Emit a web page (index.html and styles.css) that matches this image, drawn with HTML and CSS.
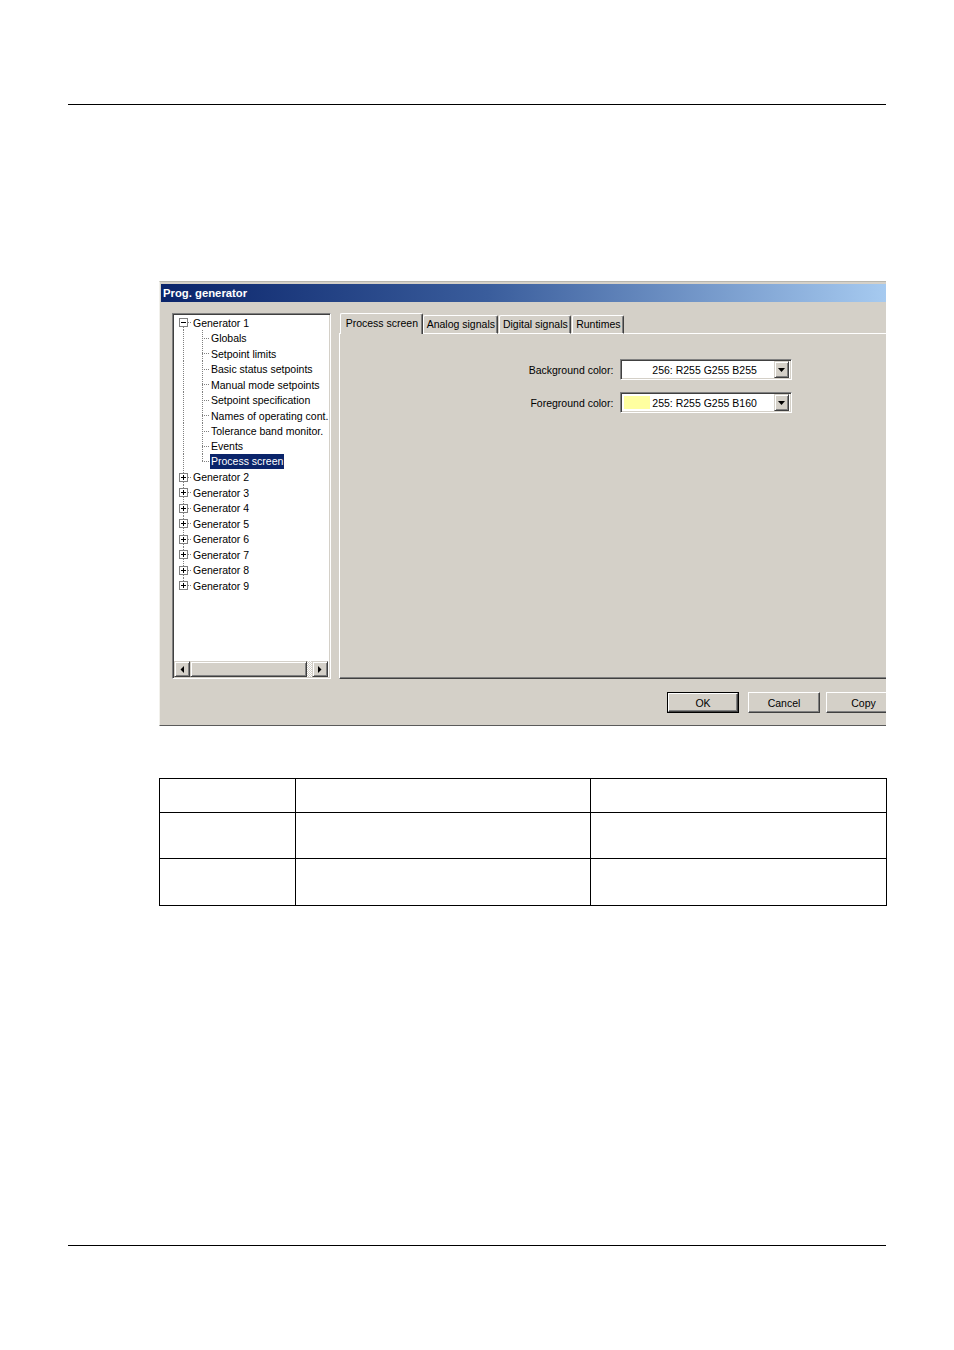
FILE: index.html
```html
<!DOCTYPE html>
<html>
<head>
<meta charset="utf-8">
<link rel="stylesheet" href="styles.css">
</head>
<body>
<div class="page">
  <div class="rule rule-top"></div>

  <div class="window">
    <div class="titlebar">Prog. generator</div>
    <div class="client">
      <div class="main">
        <div class="tree">
          <div class="tree-body">
            <div class="row gen first"><span class="g"><span class="box minus"></span></span><span class="label">Generator 1</span></div>
            <div class="row child"><span class="v"></span><span class="c"></span><span class="label">Globals</span></div>
            <div class="row child"><span class="v"></span><span class="c"></span><span class="label">Setpoint limits</span></div>
            <div class="row child"><span class="v"></span><span class="c"></span><span class="label">Basic status setpoints</span></div>
            <div class="row child"><span class="v"></span><span class="c"></span><span class="label">Manual mode setpoints</span></div>
            <div class="row child"><span class="v"></span><span class="c"></span><span class="label">Setpoint specification</span></div>
            <div class="row child"><span class="v"></span><span class="c"></span><span class="label">Names of operating cont.</span></div>
            <div class="row child"><span class="v"></span><span class="c"></span><span class="label">Tolerance band monitor.</span></div>
            <div class="row child"><span class="v"></span><span class="c"></span><span class="label">Events</span></div>
            <div class="row child lastchild"><span class="v"></span><span class="c"></span><span class="label selected">Process screen</span></div>
            <div class="row gen"><span class="g"><span class="box plus"></span></span><span class="label">Generator 2</span></div>
            <div class="row gen"><span class="g"><span class="box plus"></span></span><span class="label">Generator 3</span></div>
            <div class="row gen"><span class="g"><span class="box plus"></span></span><span class="label">Generator 4</span></div>
            <div class="row gen"><span class="g"><span class="box plus"></span></span><span class="label">Generator 5</span></div>
            <div class="row gen"><span class="g"><span class="box plus"></span></span><span class="label">Generator 6</span></div>
            <div class="row gen"><span class="g"><span class="box plus"></span></span><span class="label">Generator 7</span></div>
            <div class="row gen"><span class="g"><span class="box plus"></span></span><span class="label">Generator 8</span></div>
            <div class="row gen last"><span class="g"><span class="box plus"></span></span><span class="label">Generator 9</span></div>
          </div>
          <div class="hscroll">
            <span class="sbtn"><svg width="4" height="7" viewBox="0 0 4 7"><path d="M4 0V7L0.5 3.5Z" fill="#000"/></svg></span>
            <span class="thumb"></span>
            <span class="track"></span>
            <span class="sbtn"><svg width="4" height="7" viewBox="0 0 4 7"><path d="M0 0V7L3.5 3.5Z" fill="#000"/></svg></span>
          </div>
        </div>

        <div class="tabs">
          <div class="tabstrip">
            <span class="tab-lead"></span>
            <span class="tab active">Process screen</span>
            <span class="tab t-analog">Analog signals</span>
            <span class="tab-gap"></span>
            <span class="tab t-digital">Digital signals</span>
            <span class="tab-gap"></span>
            <span class="tab t-run">Runtimes</span>
            <span class="tab-fill"></span>
          </div>
          <div class="panel">
            <div class="form">
              <span class="flabel">Background color:</span>
              <span class="combo"><span class="swatch sw-white"></span><span class="ctext">256: R255 G255 B255</span><span class="drop"><svg width="7" height="4" viewBox="0 0 7 4"><path d="M0 0H7L3.5 4Z" fill="#000"/></svg></span></span>
              <span class="flabel">Foreground color:</span>
              <span class="combo"><span class="swatch sw-yellow"></span><span class="ctext">255: R255 G255 B160</span><span class="drop"><svg width="7" height="4" viewBox="0 0 7 4"><path d="M0 0H7L3.5 4Z" fill="#000"/></svg></span></span>
            </div>
          </div>
        </div>
      </div>

      <div class="buttons">
        <span class="btn default"><span class="btn-in">OK</span></span>
        <span class="btn cancel"><span class="btn-in">Cancel</span></span>
        <span class="btn copy"><span class="btn-in">Copy</span></span>
      </div>
    </div>
  </div>

  <table class="grid">
    <tr class="r1"><td class="c1"></td><td class="c2"></td><td class="c3"></td></tr>
    <tr class="r2"><td></td><td></td><td></td></tr>
    <tr class="r3"><td></td><td></td><td></td></tr>
  </table>

  <div class="rule rule-bottom"></div>
</div>
</body>
</html>
```

FILE: styles.css
```css
html, body {
  margin: 0;
  padding: 0;
  background: #ffffff;
}

.page {
  width: 954px;
  height: 1350px;
  padding-top: 104px;
  box-sizing: border-box;
  font-family: "Liberation Sans", Arial, sans-serif;
}

.rule {
  margin: 0 68px;
  border-top: 1px solid #000;
}

/* ---------- dialog window ---------- */
.window {
  margin: 176px 0 0 159px;
  width: 727px;
  box-sizing: border-box;
  background: #d4d0c8;
  border-top: 1px solid #b8b6ae;
  border-left: 1px solid #f2f1ec;
  border-bottom: 1px solid #5a5a5a;
  padding: 2px 0 0 1px;
  overflow: hidden;
  font-size: 10.5px;
  color: #000;
}

.titlebar {
  height: 18px;
  line-height: 18px;
  padding-left: 2px;
  background: linear-gradient(to right, #0a246a 0%, #3a5d9c 45%, #a6caf0 100%);
  color: #fff;
  font-weight: bold;
  font-size: 11.3px;
  white-space: nowrap;
}

.client {
  padding: 11px 0 12px 11px;
}

.main {
  display: flex;
  gap: 8px;
  height: 366px;
}

/* ---------- tree ---------- */
.tree {
  flex: 0 0 158px;
  box-sizing: border-box;
  display: flex;
  flex-direction: column;
  border-top: 1px solid #808080;
  border-left: 1px solid #808080;
  border-right: 1px solid #ffffff;
  border-bottom: 1px solid #ffffff;
  box-shadow: inset 1px 1px 0 #404040, inset -1px -1px 0 #d4d0c8;
  padding: 1px;
  background: #fff;
}

.tree-body {
  flex: 1;
  background: #fff;
  overflow: hidden;
}

.row {
  display: flex;
  align-items: center;
  height: 15.47px;
  white-space: nowrap;
}

.label {
  padding: 0 1px;
  line-height: 14px;
}

.label.selected {
  background: #0a246a;
  color: #fff;
  line-height: 15px;
}

.dots-v {
  background-image: repeating-linear-gradient(to bottom, #808080 0 1px, transparent 1px 2px);
}

.g {
  width: 18px;
  height: 100%;
  display: flex;
  align-items: center;
  background-image:
    repeating-linear-gradient(to bottom, #808080 0 1px, transparent 1px 2px),
    repeating-linear-gradient(to right, #808080 0 1px, transparent 1px 2px);
  background-size: 1px 100%, 5px 1px;
  background-position: 9px 0, 14px 50%;
  background-repeat: no-repeat;
}

.gen.first .g {
  background-size: 1px 50%, 5px 1px;
  background-position: 9px 100%, 14px 50%;
}

.gen.last .g {
  background-size: 1px 50%, 5px 1px;
  background-position: 9px 0, 14px 50%;
}

.box {
  width: 9px;
  height: 9px;
  box-sizing: border-box;
  margin-left: 5px;
  border: 1px solid #808080;
}

.box.minus {
  background:
    linear-gradient(#000, #000) center / 5px 1px no-repeat,
    #fff;
}

.box.plus {
  background:
    linear-gradient(#000, #000) center / 5px 1px no-repeat,
    linear-gradient(#000, #000) center / 1px 5px no-repeat,
    #fff;
}

.v {
  width: 19px;
  height: 100%;
  background-image: repeating-linear-gradient(to bottom, #808080 0 1px, transparent 1px 2px);
  background-size: 1px 100%;
  background-position: 9px 0;
  background-repeat: no-repeat;
}

.c {
  width: 17px;
  height: 100%;
  background-image:
    repeating-linear-gradient(to bottom, #808080 0 1px, transparent 1px 2px),
    repeating-linear-gradient(to right, #808080 0 1px, transparent 1px 2px);
  background-size: 1px 100%, 8px 1px;
  background-position: 9px 0, 9px 50%;
  background-repeat: no-repeat;
}

.lastchild .c {
  background-size: 1px 50%, 8px 1px;
}

/* scrollbar */
.hscroll {
  height: 16px;
  display: flex;
  flex: 0 0 16px;
}

.sbtn, .thumb {
  box-sizing: border-box;
  background: #d4d0c8;
  border-top: 1px solid #d4d0c8;
  border-left: 1px solid #d4d0c8;
  border-right: 1px solid #404040;
  border-bottom: 1px solid #404040;
  box-shadow: inset 1px 1px 0 #fff, inset -1px -1px 0 #808080;
}

.sbtn {
  width: 16px;
  display: flex;
  align-items: center;
  justify-content: center;
}

.thumb {
  width: 117px;
}

.track {
  width: 5px;
  background: repeating-conic-gradient(#ffffff 0 25%, #d4d0c8 0 50%) 0 0 / 2px 2px;
}

/* ---------- tabs ---------- */
.tabs {
  flex: 0 0 570px;
  display: flex;
  flex-direction: column;
}

.tabstrip {
  display: flex;
  align-items: flex-end;
  height: 21px;
  white-space: nowrap;
}

.tab-lead, .tab-gap, .tab-fill {
  height: 0;
  border-bottom: 1px solid #fff;
}

.tab-lead { width: 1px; }
.tab-gap { width: 1px; }
.tab-fill { flex: 1; }

.tab {
  box-sizing: border-box;
  height: 19px;
  line-height: 17px;
  text-align: center;
  border-top: 1px solid #fff;
  border-left: 1px solid #fff;
  border-right: 1px solid #404040;
  border-bottom: 1px solid #fff;
  box-shadow: inset -1px 0 0 #808080;
  border-radius: 2px 2px 0 0;
}

.tab.active {
  width: 83px;
  height: 21px;
  line-height: 18px;
  border-bottom: none;
}

.t-analog { width: 75px; }
.t-digital { width: 72px; }
.t-run { width: 52px; }

.panel {
  flex: 1;
  box-sizing: border-box;
  border-left: 1px solid #fff;
  border-bottom: 1px solid #404040;
  box-shadow: inset 0 -1px 0 #808080;
  padding-top: 25px;
}

.form {
  display: grid;
  grid-template-columns: 273px 172px;
  grid-auto-rows: 21px;
  column-gap: 7px;
  row-gap: 12px;
  align-items: center;
}

.flabel {
  text-align: right;
}

.combo {
  height: 21px;
  box-sizing: border-box;
  display: flex;
  align-items: center;
  background: #fff;
  border-top: 1px solid #808080;
  border-left: 1px solid #808080;
  border-right: 1px solid #fff;
  border-bottom: 1px solid #fff;
  box-shadow: inset 1px 1px 0 #404040, inset -1px -1px 0 #d4d0c8;
  padding: 2px 2px 2px 3px;
}

.swatch {
  width: 26px;
  height: 13px;
}

.sw-white { background: #fff; }
.sw-yellow { background: #ffffa0; }

.ctext {
  margin-left: 2px;
  flex: 1;
  white-space: nowrap;
}

.drop {
  width: 15px;
  height: 17px;
  box-sizing: border-box;
  display: flex;
  align-items: center;
  justify-content: center;
  background: #d4d0c8;
  border-top: 1px solid #d4d0c8;
  border-left: 1px solid #d4d0c8;
  border-right: 1px solid #404040;
  border-bottom: 1px solid #404040;
  box-shadow: inset 1px 1px 0 #fff, inset -1px -1px 0 #808080;
}

/* ---------- buttons ---------- */
.buttons {
  display: flex;
  margin-top: 13px;
  padding-left: 495px;
  height: 21px;
}

.btn {
  box-sizing: border-box;
  height: 21px;
  flex: 0 0 auto;
  border-top: 1px solid #fff;
  border-left: 1px solid #fff;
  border-right: 1px solid #404040;
  border-bottom: 1px solid #404040;
  display: flex;
}

.btn-in {
  flex: 1;
  display: flex;
  align-items: center;
  justify-content: center;
  box-shadow: inset -1px -1px 0 #808080;
}

.btn.default {
  width: 72px;
  border: 1px solid #000;
}

.btn.default .btn-in {
  border-top: 1px solid #fff;
  border-left: 1px solid #fff;
  border-right: 1px solid #404040;
  border-bottom: 1px solid #404040;
}

.btn.cancel {
  width: 72px;
  margin-left: 9px;
}

.btn.copy {
  width: 75px;
  margin-left: 6px;
}

/* ---------- table ---------- */
.grid {
  margin: 52px 0 0 159px;
  width: 728px;
  border-collapse: collapse;
  table-layout: fixed;
}

.grid td {
  border: 1px solid #000;
  padding: 0;
}

.grid .c1 { width: 135px; }
.grid .c2 { width: 294px; }

.grid .r1 td { height: 33px; }
.grid .r2 td { height: 45px; }
.grid .r3 td { height: 46px; }

.rule-bottom {
  margin-top: 339px;
}
```
